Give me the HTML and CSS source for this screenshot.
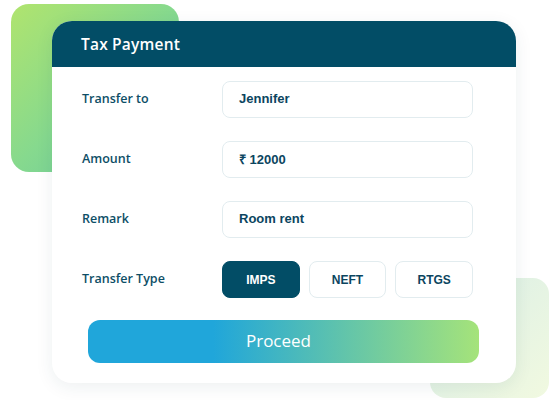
FILE: index.html
```html
<!DOCTYPE html>
<html lang="en">
<head>
  <meta charset="UTF-8">
  <meta name="viewport" content="width=device-width, initial-scale=1.0">
  <title>Tax Payment</title>
  <link rel="stylesheet" href="styles.css">
</head>
<body>

  <div class="stage">
    <!-- Decorative backdrops -->
    <div class="blob blob-green"></div>
    <div class="blob blob-pale"></div>

    <!-- Payment card -->
    <section class="card">
      <header class="card-header">
        <h1>Tax Payment</h1>
      </header>

      <div class="card-body">
        <div class="field-row">
          <span class="field-label">Transfer to</span>
          <div class="field-input">Jennifer</div>
        </div>
        <div class="field-row">
          <span class="field-label">Amount</span>
          <div class="field-input">&#8377; 12000</div>
        </div>
        <div class="field-row">
          <span class="field-label">Remark</span>
          <div class="field-input">Room rent</div>
        </div>
        <div class="field-row">
          <span class="field-label">Transfer Type</span>
          <div class="type-group">
            <button class="type-btn active">IMPS</button>
            <button class="type-btn">NEFT</button>
            <button class="type-btn">RTGS</button>
          </div>
        </div>

        <button class="proceed-btn">Proceed</button>
      </div>
    </section>
  </div>

</body>
</html>
```

FILE: styles.css
```css
body {
  margin: 0;
  padding: 0;
  background-color: #fff;
  font-family: 'Open Sans', 'Noto Sans', sans-serif;
}

.stage {
  position: relative;
  width: 556px;
  height: 400px;
  overflow: hidden;
  padding-top: 21px;
  box-sizing: border-box;
}

.blob {
  position: absolute;
  z-index: 0;
}

.blob-green {
  left: 11px;
  top: 4px;
  width: 168px;
  height: 168px;
  border-radius: 18px;
  background: linear-gradient(135deg, #b0e46e 0%, #86d98e 50%, #62c6a2 100%);
}

.blob-pale {
  left: 430px;
  top: 278px;
  width: 119px;
  height: 120px;
  border-radius: 16px;
  background: linear-gradient(135deg, #d8eee6 0%, #e6f4e3 55%, #f1f9e0 100%);
}

.card {
  position: relative;
  z-index: 1;
  width: 464px;
  margin-left: 52px;
  background-color: #fff;
  border-radius: 20px;
  box-shadow: 0 4px 18px rgba(20, 60, 80, 0.08);
  overflow: hidden;
}

.card-header {
  height: 46px;
  background-color: #024d66;
  display: flex;
  align-items: center;
  padding-left: 29px;
}

.card-header h1 {
  margin: 0;
  color: #fff;
  font-size: 15.5px;
  font-weight: 600;
  letter-spacing: 0.2px;
}

.card-body {
  padding: 14px 43px 20px 30px;
  display: flex;
  flex-direction: column;
  gap: 23px;
}

.field-row {
  display: grid;
  grid-template-columns: 140px 1fr;
  align-items: center;
}

.field-label {
  color: #0d4e66;
  font-size: 12.5px;
  font-weight: 600;
  margin-top: -3px;
}

.field-input {
  height: 37px;
  box-sizing: border-box;
  border: 1px solid #e2ecef;
  border-radius: 8px;
  padding-left: 16px;
  padding-bottom: 2px;
  display: flex;
  align-items: center;
  color: #0b4560;
  font-family: 'Liberation Sans', Arial, sans-serif;
  font-size: 13px;
  font-weight: bold;
}

.type-group {
  display: flex;
  gap: 9px;
}

.type-btn {
  flex: 1;
  height: 37px;
  border: 1px solid #e2ecef;
  border-radius: 8px;
  background-color: #fff;
  color: #0b4560;
  font-family: 'Liberation Sans', Arial, sans-serif;
  font-size: 12px;
  font-weight: bold;
  cursor: pointer;
}

.type-btn.active {
  background-color: #024d66;
  border-color: #024d66;
  color: #fff;
}

.proceed-btn {
  margin: -1px 0 0 6px;
  width: 391px;
  height: 43px;
  border: none;
  border-radius: 12px;
  padding: 0 10px 2px 0;
  background: linear-gradient(90deg, #20a6da 0%, #20a6da 32%, #a5e37a 100%);
  color: #fff;
  font-family: 'Open Sans', 'Noto Sans', sans-serif;
  font-size: 17px;
  font-weight: 400;
  cursor: pointer;
}
```
